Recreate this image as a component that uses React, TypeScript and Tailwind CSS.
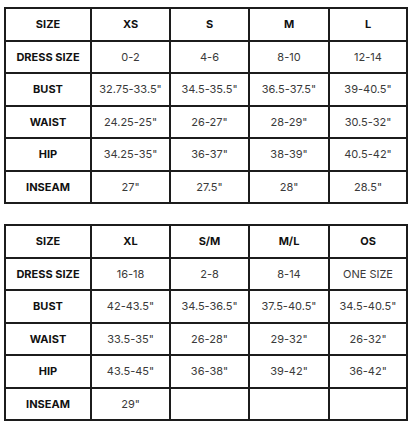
const table1 = {
  head: ['SIZE', 'XS', 'S', 'M', 'L'],
  rows: [
    ['DRESS SIZE', '0-2', '4-6', '8-10', '12-14'],
    ['BUST', '32.75-33.5"', '34.5-35.5"', '36.5-37.5"', '39-40.5"'],
    ['WAIST', '24.25-25"', '26-27"', '28-29"', '30.5-32"'],
    ['HIP', '34.25-35"', '36-37"', '38-39"', '40.5-42"'],
    ['INSEAM', '27"', '27.5"', '28"', '28.5"'],
  ],
}

const table2 = {
  head: ['SIZE', 'XL', 'S/M', 'M/L', 'OS'],
  rows: [
    ['DRESS SIZE', '16-18', '2-8', '8-14', 'ONE SIZE'],
    ['BUST', '42-43.5"', '34.5-36.5"', '37.5-40.5"', '34.5-40.5"'],
    ['WAIST', '33.5-35"', '26-28"', '29-32"', '26-32"'],
    ['HIP', '43.5-45"', '36-38"', '39-42"', '36-42"'],
    ['INSEAM', '29"', '', '', ''],
  ],
}

function SizeTable({ head, rows }: { head: string[]; rows: string[][] }) {
  return (
    <div className="grid w-[404px] grid-cols-[84px_77px_77px_78px_76px] gap-[2px] bg-[#1c1c1c] p-[2px]">
      {head.map(h => (
        <div key={h} className="flex h-[30.5px] items-center justify-center bg-white text-[11px] font-bold text-[#111]">
          {h}
        </div>
      ))}
      {rows.map(row =>
        row.map((cell, i) => (
          <div
            key={row[0] + i}
            className={
              i === 0
                ? 'flex h-[30.5px] items-center justify-center bg-white text-[11px] font-bold text-[#111]'
                : 'flex h-[30.5px] items-center justify-center bg-white text-[11px] text-[#3a3a3a]'
            }
          >
            {cell}
          </div>
        )),
      )}
    </div>
  )
}

export default function App() {
  return (
    <div className="flex flex-col gap-[20px] bg-white pl-[4px] pt-[7px] font-['Inter',sans-serif]">
      <SizeTable {...table1} />
      <SizeTable {...table2} />
    </div>
  )
}
